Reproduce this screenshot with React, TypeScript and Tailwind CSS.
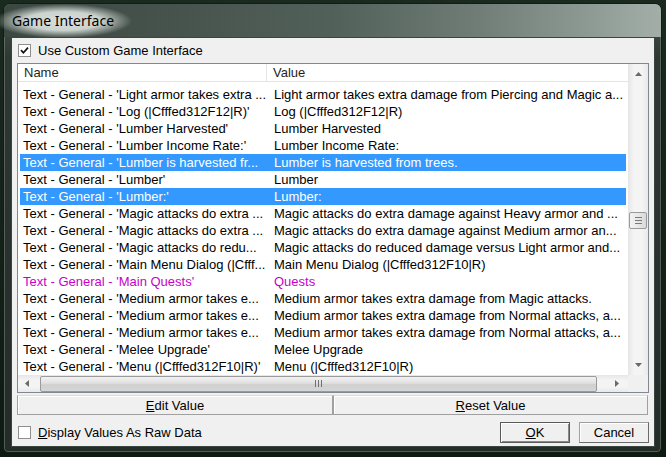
import React from "react";

type Row = { name: string; value: string; sel?: boolean; magenta?: boolean };

const rows: Row[] = [
  { name: "Text - General - 'Light armor takes extra ...", value: "Light armor takes extra damage from Piercing and Magic a..." },
  { name: "Text - General - 'Log (|Cfffed312F12|R)'", value: "Log (|Cfffed312F12|R)" },
  { name: "Text - General - 'Lumber Harvested'", value: "Lumber Harvested" },
  { name: "Text - General - 'Lumber Income Rate:'", value: "Lumber Income Rate:" },
  { name: "Text - General - 'Lumber is harvested fr...", value: "Lumber is harvested from trees.", sel: true },
  { name: "Text - General - 'Lumber'", value: "Lumber" },
  { name: "Text - General - 'Lumber:'", value: "Lumber:", sel: true },
  { name: "Text - General - 'Magic attacks do extra ...", value: "Magic attacks do extra damage against Heavy armor and ..." },
  { name: "Text - General - 'Magic attacks do extra ...", value: "Magic attacks do extra damage against Medium armor an..." },
  { name: "Text - General - 'Magic attacks do redu...", value: "Magic attacks do reduced damage versus Light armor and..." },
  { name: "Text - General - 'Main Menu Dialog (|Cfff...", value: "Main Menu Dialog (|Cfffed312F10|R)" },
  { name: "Text - General - 'Main Quests'", value: "Quests", magenta: true },
  { name: "Text - General - 'Medium armor takes e...", value: "Medium armor takes extra damage from Magic attacks." },
  { name: "Text - General - 'Medium armor takes e...", value: "Medium armor takes extra damage from Normal attacks, a..." },
  { name: "Text - General - 'Medium armor takes e...", value: "Medium armor takes extra damage from Normal attacks, a..." },
  { name: "Text - General - 'Melee Upgrade'", value: "Melee Upgrade" },
  { name: "Text - General - 'Menu (|Cfffed312F10|R)'", value: "Menu (|Cfffed312F10|R)" },
];

function Check({ checked }: { checked?: boolean }) {
  return (
    <div className="w-[13px] h-[13px] shrink-0 border border-[#8e8f8f] bg-white flex items-center justify-center">
      {checked && (
        <svg width="9" height="9" viewBox="0 0 9 9">
          <path d="M1 4.2 L3.4 6.8 L8 1.6" stroke="#111" strokeWidth="1.7" fill="none" />
        </svg>
      )}
    </div>
  );
}

function Arrow({ dir }: { dir: "up" | "down" | "left" | "right" }) {
  const d =
    dir === "up"
      ? "M3.5 0 L7 4 L0 4 Z"
      : dir === "down"
      ? "M0 0 L7 0 L3.5 4 Z"
      : dir === "left"
      ? "M4 0 L4 7 L0 3.5 Z"
      : "M0 0 L0 7 L4 3.5 Z";
  const w = dir === "up" || dir === "down" ? 7 : 4;
  const h = dir === "up" || dir === "down" ? 4 : 7;
  return (
    <svg width={w} height={h} viewBox={`0 0 ${w} ${h}`}>
      <path d={d} fill="#6a6a6a" />
    </svg>
  );
}

function Btn({ children, className }: { children: React.ReactNode; className?: string }) {
  return (
    <div
      className={
        "flex items-center justify-center bg-[#f0f0f0] text-black " +
        (className ?? "")
      }
    >
      {children}
    </div>
  );
}

export default function App() {
  return (
    <div className="w-[666px] h-[457px] overflow-hidden bg-[linear-gradient(180deg,#1a2a1f_0%,#122018_60%,#0d1a11_100%)] pl-[3px] pt-[3px] font-['Liberation_Sans',Arial,sans-serif] text-[13px] leading-[17px]">
      <div className="w-[659px] h-[450px] rounded-t-[7px] rounded-b-[5px] border border-[#141a17] bg-[linear-gradient(180deg,#47534d_0%,#2f3934_12%,#29322e_50%,#242c28_100%)] shadow-[inset_0_0_0_1px_rgba(255,255,255,0.22)] flex flex-col">
        {/* title bar */}
        <div className="h-[33px] shrink-0 flex items-center pl-[8px] rounded-t-[6px] bg-[linear-gradient(90deg,#3b4842_0%,#46534c_25%,#52605a_50%,#6f7d76_72%,#8f9c95_90%,#a3aea8_100%)]">
          <span className="-ml-[18px] px-[18px] py-[8px] bg-[radial-gradient(closest-side,rgba(222,228,224,0.97)_0%,rgba(216,222,218,0.92)_55%,rgba(205,212,208,0)_100%)] text-[14px] leading-[18px] text-black font-['Noto_Sans',sans-serif]">
            Game Interface
          </span>
        </div>
        {/* client area */}
        <div className="ml-[7px] w-[644px] h-[410px] shrink-0 border border-[#3a4540] bg-[#f0f0f0] flex flex-col px-[5px]">
          <div className="flex items-center mt-[6px] ml-[1px] h-[13px] gap-[7px]">
            <Check checked />
            <span className="text-black">Use Custom Game Interface</span>
          </div>

          {/* list */}
          <div className="mt-[6px] w-[632px] h-[330px] border border-[#828790] bg-white flex flex-col">
            <div className="flex h-[311px]">
              <div className="w-[610px] flex flex-col">
                <div className="h-[18px] flex border-b border-[#e5e5e5] text-[#1e1e1e]">
                  <div className="w-[249px] pl-[6px] border-r border-[#e5e5e5] leading-[18px]">Name</div>
                  <div className="pl-[6px] leading-[18px]">Value</div>
                </div>
                <div className="pt-[4px] flex flex-col">
                  {rows.map((r, i) => (
                    <div
                      key={i}
                      className={
                        "h-[17px] mx-[2px] flex whitespace-nowrap " +
                        (r.sel ? "bg-[#3399ff] text-white" : r.magenta ? "text-[#c800c8]" : "text-black")
                      }
                    >
                      <div className="w-[247px] pl-[3px] overflow-hidden">{r.name}</div>
                      <div className="pl-[7px] flex-1 overflow-hidden">{r.value}</div>
                    </div>
                  ))}
                </div>
              </div>
              {/* vertical scrollbar */}
              <div className="w-[20px] bg-[linear-gradient(90deg,#e6e6e6,#f4f4f4_30%,#f4f4f4_70%,#e9e9e9)] flex flex-col items-center">
                <div className="h-[18px] w-full flex items-center justify-center pt-[1px]">
                  <Arrow dir="up" />
                </div>
                <div className="mt-[130px] w-[18px] h-[17px] rounded-[2px] border border-[#9a9a9a] bg-[linear-gradient(90deg,#f3f3f3,#e8e8e8_50%,#d9d9d9)] flex flex-col items-center justify-center gap-[2px]">
                  <div className="w-[7px] h-px bg-[#7a7a7a]" />
                  <div className="w-[7px] h-px bg-[#7a7a7a]" />
                  <div className="w-[7px] h-px bg-[#7a7a7a]" />
                </div>
                <div className="mt-auto h-[18px] w-full flex items-center justify-center pb-[3px]">
                  <Arrow dir="down" />
                </div>
              </div>
            </div>
            {/* horizontal scrollbar */}
            <div className="flex h-[17px]">
              <div className="w-[610px] flex items-center bg-[linear-gradient(180deg,#e6e6e6,#f4f4f4_30%,#f4f4f4_70%,#e9e9e9)]">
                <div className="w-[18px] h-full flex items-center justify-center">
                  <Arrow dir="left" />
                </div>
                <div className="ml-[4px] w-[557px] h-[16px] rounded-[2px] border border-[#9a9a9a] bg-[linear-gradient(180deg,#f2f2f2,#e0e0e0_45%,#cfcfcf_55%,#d6d6d6)] flex items-center justify-center gap-[2px]">
                  <div className="w-px h-[7px] bg-[#6f6f6f]" />
                  <div className="w-px h-[7px] bg-[#6f6f6f]" />
                  <div className="w-px h-[7px] bg-[#6f6f6f]" />
                </div>
                <div className="ml-auto w-[22px] h-full flex items-center justify-center">
                  <Arrow dir="right" />
                </div>
              </div>
              <div className="w-[20px] bg-[#f0f0f0]" />
            </div>
          </div>

          {/* edit / reset */}
          <div className="mt-[2px] flex w-[631px] h-[20px]">
            <Btn className="w-[316px] h-full border border-[#a0a0a0] border-t-[#dcdcdc] shadow-[inset_1px_1px_0_#ffffff]">
              <span>
                <span className="underline">E</span>dit Value
              </span>
            </Btn>
            <Btn className="w-[315px] h-full border border-[#a0a0a0] border-t-[#dcdcdc] shadow-[inset_1px_1px_0_#ffffff]">
              <span>
                <span className="underline">R</span>eset Value
              </span>
            </Btn>
          </div>

          {/* bottom row */}
          <div className="mt-[7px] h-[21px] flex items-center">
            <div className="ml-[1px] flex items-center gap-[7px]">
              <Check />
              <span>
                <span className="underline">D</span>isplay Values As Raw Data
              </span>
            </div>
            <Btn className="ml-auto w-[70px] h-[21px] border border-[#5a5a5a] shadow-[inset_1px_1px_0_#ffffff,inset_-1px_-1px_0_#8a8a8a]">
              <span>
                <span className="underline">O</span>K
              </span>
            </Btn>
            <Btn className="ml-[9px] w-[70px] h-[21px] border border-[#a0a0a0] border-b-[#6a6a6a] border-r-[#6a6a6a] shadow-[inset_1px_1px_0_#ffffff]">
              <span>Cancel</span>
            </Btn>
          </div>
        </div>
      </div>
    </div>
  );
}
